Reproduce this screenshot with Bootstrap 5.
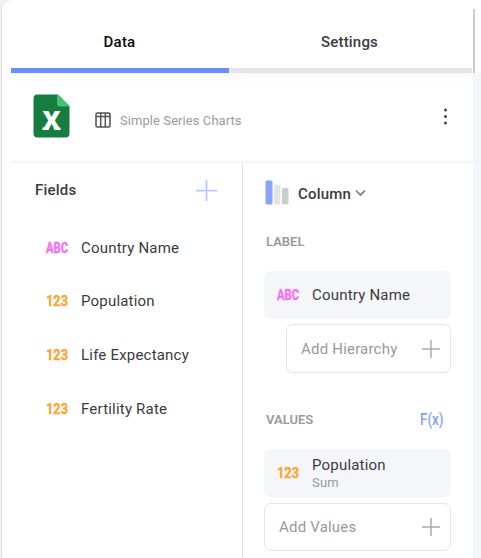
<!DOCTYPE html>
<html lang="en">
<head>
<meta charset="utf-8">
<meta name="viewport" content="width=device-width, initial-scale=1">
<title>Chart data</title>
<link href="https://cdn.jsdelivr.net/npm/bootstrap@5.3.0/dist/css/bootstrap.min.css" rel="stylesheet">
<style>
body{font-family:Roboto,"Liberation Sans",sans-serif;font-size:15px;line-height:20px;letter-spacing:.2px;color:#3b3b3b;background:#fff;height:558px;overflow:hidden}
svg{display:block;flex:none;overflow:visible}
.edge{background:#f1f1f1;padding-left:2px;height:558px}
.panel{background:#fff;border-top-left-radius:10px;box-shadow:-1px 0 0 #e2e2e2;height:558px}
.main{width:462px;margin-left:9px}
.side{width:8px}
.side-thumb{width:2px;height:64px;margin-top:9px;background:#ccc}
.side-track{background:#f5f6fb}
.tabs{height:73px;padding-top:15px}
.tabs .nav-link{color:#3b3b3b;font-weight:500;border-bottom:5px solid #e5e5e5;border-radius:0;height:58px;padding:17px 2px 0 0;letter-spacing:.2px}
.tabs .nav-link.active{color:#0b0b0b;border-color:#698ff8;padding-right:1px}
.tab-a{width:218px}.tab-b{width:243px}
.source{height:90px;border-bottom:2px solid #f4f5fb;background:linear-gradient(#f8f8f8,#fff 10px);padding:21px 24px 0 22px}
.source-name{font-size:13px;color:#9b9b9b;margin:17px 0 0 9px;letter-spacing:.07px}
.fields{width:232px;border-right:1px solid #e2e3e7;height:395px;padding:17px 25px 0 24px}
.head{font-weight:500;letter-spacing:.2px}
.head-fields{height:21px}
.head-text{margin-bottom:2px}
.field-list{margin:20px 0 0 10px}
.field{height:53.600px}
.type{font-size:15.500px;font-weight:700;letter-spacing:0;stroke-width:.35}
.type-text{fill:#fa6af5;stroke:#fa6af5}
.type-num{fill:#ffa12e;stroke:#ffa12e}
.design{padding:17px 21px 0 21px;width:229px}
.caption{font-size:13px;font-weight:600;color:#999;letter-spacing:0;padding-left:2px}
.pill{height:48px;border-radius:7px;background:#f5f6fa;padding-left:12px}
.adder{height:49px;border:1px solid #e5e5e5;border-radius:7px;color:#999;padding:0 10px 0 14px}
.adder svg{color:#aaa}
.sum{font-size:13px;line-height:14px;color:#999;margin-top:3px}
</style>
<script src="https://cdn.jsdelivr.net/npm/bootstrap@5.3.0/dist/js/bootstrap.bundle.min.js"></script>
</head>
<body>
<svg width="0" height="0" class="position-absolute">
<defs>
<symbol id="plus" viewBox="0 0 18 18"><path d="M9 0v18M0 9h18" stroke="currentColor" stroke-width="1.500"/></symbol>
</defs>
</svg>
<div class="edge"><div class="panel d-flex">
<main class="main">
<ul class="nav tabs text-center">
<li class="nav-item tab-a"><a class="nav-link active">Data</a></li>
<li class="nav-item tab-b"><a class="nav-link">Settings</a></li>
</ul>
<section class="source d-flex align-items-start">
<svg width="37" height="44" viewBox="0 0 37 44"><path d="M4 .5h21L36.500 12v27.500a4 4 0 0 1-4 4H4.500a4 4 0 0 1-4-4v-35a4 4 0 0 1 4-4z" fill="#167c40"/><path d="M24 .5h1L36.500 12v.5H27a3 3 0 0 1-3-3z" fill="#40c279"/><text x="9.500" y="35.500" textLength="18" lengthAdjust="spacingAndGlyphs" font-weight="900" font-size="25.500" letter-spacing="0" fill="#fff">X</text><path d="M9.500 34.500h6M21 34.500h6.500" stroke="#fff" stroke-width="2"/></svg>
<svg width="16" height="16" viewBox="0 0 16 16" style="margin:18px 0 0 25px"><rect x="1" y="1" width="14" height="14" rx="1.500" fill="none" stroke="#555" stroke-width="1.600"/><path d="M1 4.500h14M5.700 1v14M10.300 1v14" stroke="#555" stroke-width="1.500"/></svg>
<span class="source-name">Simple Series Charts</span>
<svg class="ms-auto" width="6" height="18" viewBox="0 0 6 18" fill="#444" style="margin-top:14px"><circle cx="2.500" cy="2" r="1.500"/><circle cx="2.500" cy="8.500" r="1.500"/><circle cx="2.500" cy="15" r="1.500"/></svg>
</section>
<div class="d-flex">
<section class="fields">
<div class="d-flex justify-content-between align-items-center head head-fields"><span class="head-text">Fields</span><svg width="21" height="21" color="#b5c8ff"><use href="#plus"/></svg></div>
<div class="field-list">
<div class="field d-flex align-items-center"><svg width="24" height="18"><text class="type type-text" x="1" y="14.200" textLength="22" lengthAdjust="spacingAndGlyphs">ABC</text></svg><span style="margin-left:12px">Country Name</span></div>
<div class="field d-flex align-items-center"><svg width="24" height="18"><text class="type type-num" x="1" y="14.200" textLength="22" lengthAdjust="spacingAndGlyphs">123</text></svg><span style="margin-left:12px">Population</span></div>
<div class="field d-flex align-items-center"><svg width="24" height="18"><text class="type type-num" x="1" y="14.200" textLength="22" lengthAdjust="spacingAndGlyphs">123</text></svg><span style="margin-left:12px">Life Expectancy</span></div>
<div class="field d-flex align-items-center"><svg width="24" height="18"><text class="type type-num" x="1" y="14.200" textLength="22" lengthAdjust="spacingAndGlyphs">123</text></svg><span style="margin-left:12px">Fertility Rate</span></div>
</div>
</section>
<section class="design">
<div class="d-flex align-items-center head">
<svg width="25" height="25" viewBox="0 0 25 25"><rect x="1.500" y=".5" width="7" height="24" rx="1.500" fill="#88a5fa"/><rect x="10" y="4.500" width="6.500" height="20" rx="1.500" fill="#e2e5e4"/><rect x="18" y="8" width="6.500" height="16.500" rx="1.500" fill="#c9cdcc"/></svg>
<span style="margin:2px 0 0 9px">Column</span><svg width="11" height="8" viewBox="0 0 11 8" style="margin-left:4px"><path d="M1 1.500l4.500 4.500 4.500-4.500" fill="none" stroke="#777" stroke-width="1.600"/></svg></div>
<div class="caption" style="margin-top:27px">LABEL</div>
<div class="pill d-flex align-items-center" style="margin-top:19px"><svg width="24" height="18"><text class="type type-text" x="1" y="14.200" textLength="22" lengthAdjust="spacingAndGlyphs">ABC</text></svg><span style="margin-left:12px">Country Name</span></div>
<div class="adder d-flex align-items-center justify-content-between" style="margin:5px 0 0 22px">Add Hierarchy<svg width="18" height="18"><use href="#plus"/></svg></div>
<div class="caption d-flex justify-content-between align-items-center" style="margin-top:36px">VALUES<svg width="28" height="22" style="margin-right:4px"><text x="1" y="15.500" textLength="23.500" lengthAdjust="spacingAndGlyphs" font-size="16" font-weight="500" letter-spacing="0" fill="#84a2fa">F(x)</text></svg></div>
<div class="pill d-flex align-items-center" style="margin-top:18px"><svg width="24" height="18"><text class="type type-num" x="1" y="14.200" textLength="22" lengthAdjust="spacingAndGlyphs">123</text></svg><div style="margin:2px 0 0 12px"><div class="lh-1">Population</div><div class="sum">Sum</div></div></div>
<div class="adder d-flex align-items-center justify-content-between" style="margin-top:6px;height:48px">Add Values<svg width="18" height="18"><use href="#plus"/></svg></div>
</section>
</div>
</main>
<aside class="side d-flex flex-column"><div class="side-thumb"></div><div class="side-track flex-fill"></div></aside>
</div></div>
</body>
</html>
